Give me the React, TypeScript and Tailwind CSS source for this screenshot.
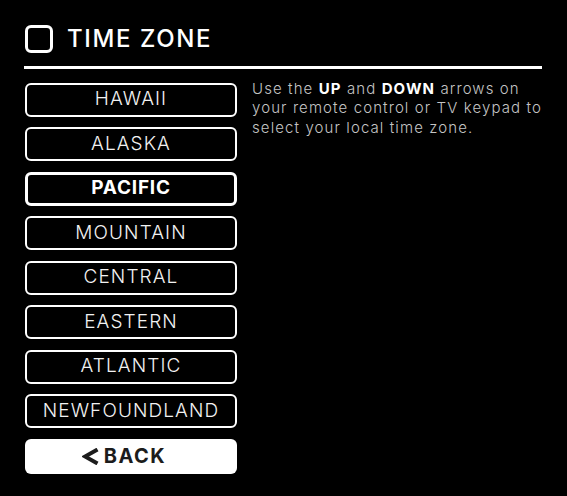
import React from "react";

const zones = ["HAWAII", "ALASKA", "PACIFIC", "MOUNTAIN", "CENTRAL", "EASTERN", "ATLANTIC", "NEWFOUNDLAND"];
const selected = "PACIFIC";

export default function App() {
  return (
    <div
      className="w-[567px] h-[496px] bg-black text-white overflow-hidden"
      style={{ fontFamily: "Inter, 'Liberation Sans', sans-serif" }}
    >
      <div className="pl-[24px] pr-[25px] pt-[25px]">
        <div className="flex items-center gap-[14px] pl-[1px]">
          <div className="w-[28px] h-[28px] rounded-[6px] border-[3px] border-white" />
          <h1 className="text-[24px] leading-[28px] font-medium tracking-[1.6px]">TIME ZONE</h1>
        </div>
        <div className="mt-[13px] h-[2.5px] bg-white" />
        <div className="flex mt-[14px] pl-[1px]">
          <div className="flex flex-col gap-[10.5px] w-[212px] shrink-0">
            {zones.map((z) => (
              <div
                key={z}
                className={
                  z === selected
                    ? "h-[34px] rounded-[6px] border-[3px] border-white flex items-center justify-center text-[19px] font-bold tracking-[0.8px]"
                    : "h-[34px] rounded-[6px] border-2 border-white flex items-center justify-center text-[19px] font-light text-[#f2f2f2] tracking-[1.1px]"
                }
              >
                {z}
              </div>
            ))}
            <div className="h-[35px] rounded-[6px] bg-white text-[#1c1c1c] flex items-center justify-center gap-[5px] pr-[14px]">
              {/* back chevron */}
              <svg width="17" height="17" viewBox="0 0 17 17" className="shrink-0">
                <path d="M15.5 1.5 L3 8.5 L15.5 15.5" fill="none" stroke="#1c1c1c" strokeWidth="4" strokeLinejoin="miter" />
              </svg>
              <span className="text-[20px] font-bold tracking-[1.5px]">BACK</span>
            </div>
          </div>
          <p className="ml-[15px] -mt-[4px] text-[15px] leading-[19.5px] font-light text-[#c4c4c4] tracking-[1.1px] whitespace-nowrap">
            Use the <b className="font-bold text-white">UP</b> and{" "}
            <b className="font-bold text-white">DOWN</b> arrows on
            <br />
            your remote control or TV keypad to
            <br />
            select your local time zone.
          </p>
        </div>
      </div>
    </div>
  );
}
